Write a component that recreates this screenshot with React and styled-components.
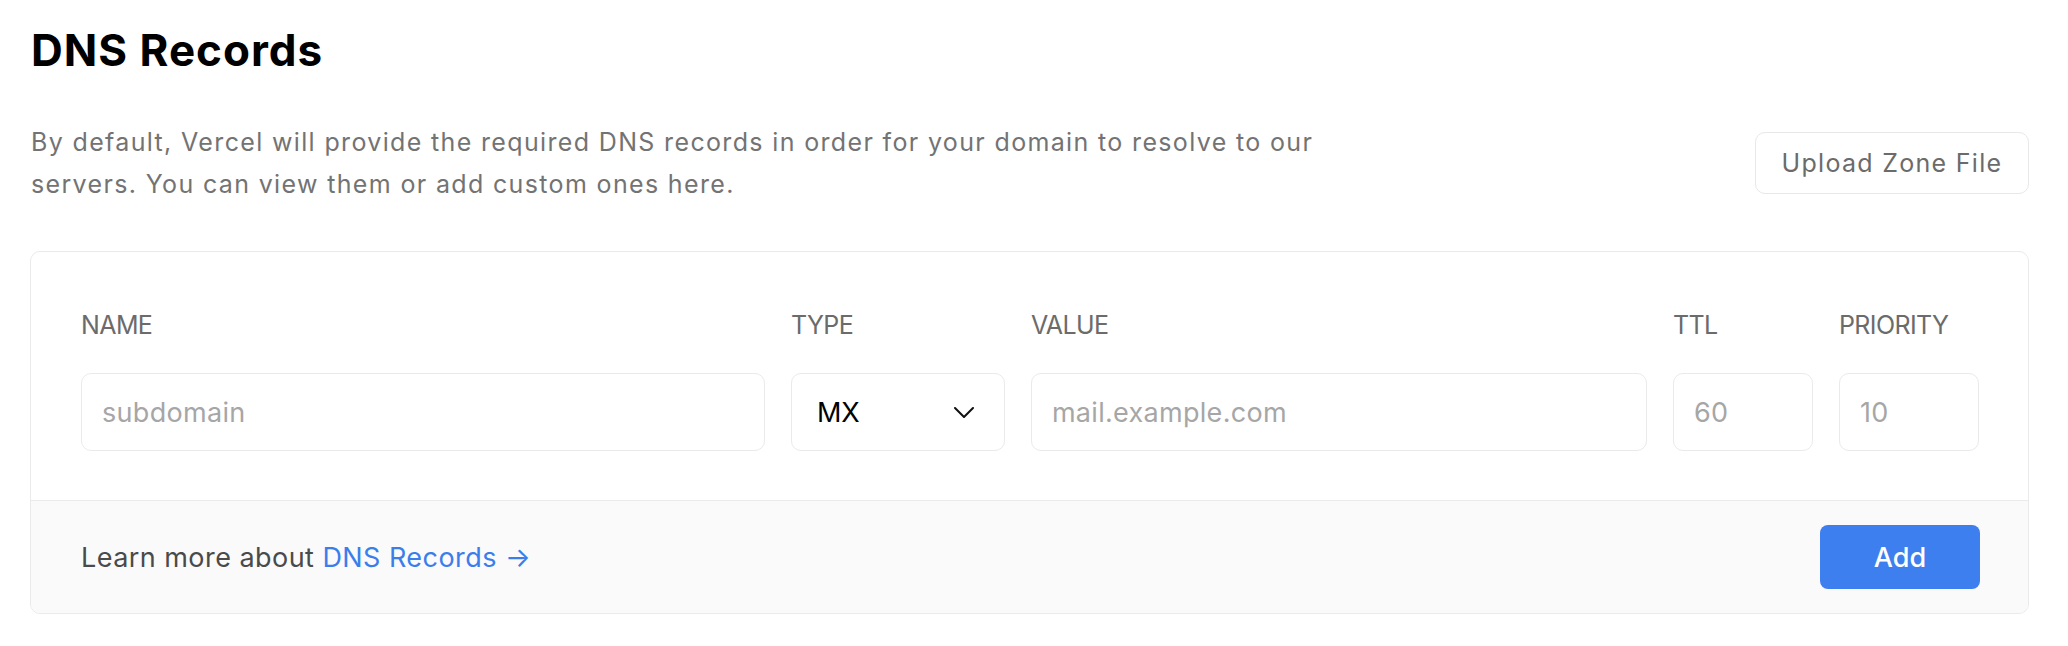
import React, { useState } from 'react';
import styled, { createGlobalStyle } from 'styled-components';

const GlobalStyle = createGlobalStyle`
    body {
        margin: 0;
        background: #ffffff;
        font-family: Inter, "Noto Sans", Arial, sans-serif;
        -webkit-font-smoothing: antialiased;
    }
`;

const Page = styled.div`
    padding: 23px 39px 30px 30px;
`;

const Title = styled.h1`
    margin: 0 0 0 1px;
    font-size: 44px;
    line-height: 54px;
    font-weight: 700;
    letter-spacing: 1px;
    color: #000;
`;

const HeaderRow = styled.div`
    display: flex;
    align-items: center;
    justify-content: space-between;
    margin-top: 44px;
    margin-bottom: 46px;
`;

const Description = styled.p`
    margin: 0 0 0 1px;
    max-width: 1340px;
    font-size: 25px;
    line-height: 42px;
    letter-spacing: 1.35px;
    color: #737373;
`;

const GhostButton = styled.button`
    flex-shrink: 0;
    height: 62px;
    width: 274px;
    border: 1px solid #e8e8e8;
    border-radius: 10px;
    background: #fff;
    color: #6b6b6b;
    font-family: inherit;
    font-size: 25px;
    font-weight: 400;
    letter-spacing: 1.3px;
    cursor: pointer;
`;

const Card = styled.div`
    border: 1px solid #eaeaea;
    border-radius: 10px;
    overflow: hidden;
    background: #fff;
`;

const CardBody = styled.div`
    display: grid;
    grid-template-columns: minmax(0, 1.11fr) 214px minmax(0, 1fr) 140px 140px;
    column-gap: 26px;
    padding: 55px 49px 49px 50px;
`;

const Field = styled.div`
    display: flex;
    flex-direction: column;
    gap: 30px;
`;

const Label = styled.label`
    font-size: 25px;
    line-height: 36px;
    letter-spacing: -0.6px;
    color: #6b6b6b;
    text-transform: uppercase;
`;

const TextInput = styled.input`
    box-sizing: border-box;
    width: 100%;
    height: 78px;
    padding: 0 20px;
    border: 1px solid #eaeaea;
    border-radius: 10px;
    font-family: inherit;
    font-size: 27px;
    letter-spacing: 0.3px;
    color: #000;
    outline: none;

    &::placeholder {
        color: #a6a6a6;
    }
`;

const SelectBox = styled.div`
    box-sizing: border-box;
    height: 78px;
    padding: 0 30px 0 25px;
    border: 1px solid #eaeaea;
    border-radius: 10px;
    display: flex;
    align-items: center;
    justify-content: space-between;
    font-size: 27px;
    color: #000;
    cursor: pointer;
`;

const CardFooter = styled.div`
    display: flex;
    align-items: center;
    justify-content: space-between;
    padding: 24px 48px 24px 50px;
    border-top: 1px solid #eaeaea;
    background: #fafafa;
`;

const FooterText = styled.span`
    font-size: 27px;
    letter-spacing: 0.45px;
    color: #4a4a4a;
`;

const Link = styled.a`
    color: #3b7eeb;
    text-decoration: none;
`;

const PrimaryButton = styled.button`
    height: 64px;
    width: 160px;
    border: none;
    border-radius: 8px;
    background: #3d7fee;
    color: #fff;
    font-family: inherit;
    font-size: 27px;
    font-weight: 500;
    cursor: pointer;
`;

const Chevron = () => (
    <svg width="20" height="11" viewBox="0 0 20 11" fill="none">
        <polyline points="1,1 10,10 19,1" stroke="#111" strokeWidth="2" strokeLinecap="round" strokeLinejoin="round" />
    </svg>
);

export default function App() {
    const [type] = useState('MX');

    return (
        <Page>
            <GlobalStyle />
            <Title>DNS Records</Title>

            <HeaderRow>
                <Description>
                    By default, Vercel will provide the required DNS records in order for your domain to resolve to our
                    servers. You can view them or add custom ones here.
                </Description>
                <GhostButton>Upload Zone File</GhostButton>
            </HeaderRow>

            <Card>
                <CardBody>
                    <Field>
                        <Label>Name</Label>
                        <TextInput placeholder="subdomain" />
                    </Field>
                    <Field>
                        <Label>Type</Label>
                        <SelectBox>
                            {type}
                            <Chevron />
                        </SelectBox>
                    </Field>
                    <Field>
                        <Label>Value</Label>
                        <TextInput placeholder="mail.example.com" />
                    </Field>
                    <Field>
                        <Label>TTL</Label>
                        <TextInput placeholder="60" />
                    </Field>
                    <Field>
                        <Label>Priority</Label>
                        <TextInput placeholder="10" />
                    </Field>
                </CardBody>
                <CardFooter>
                    <FooterText>
                        Learn more about <Link href="#">DNS Records →</Link>
                    </FooterText>
                    <PrimaryButton>Add</PrimaryButton>
                </CardFooter>
            </Card>
        </Page>
    );
}
